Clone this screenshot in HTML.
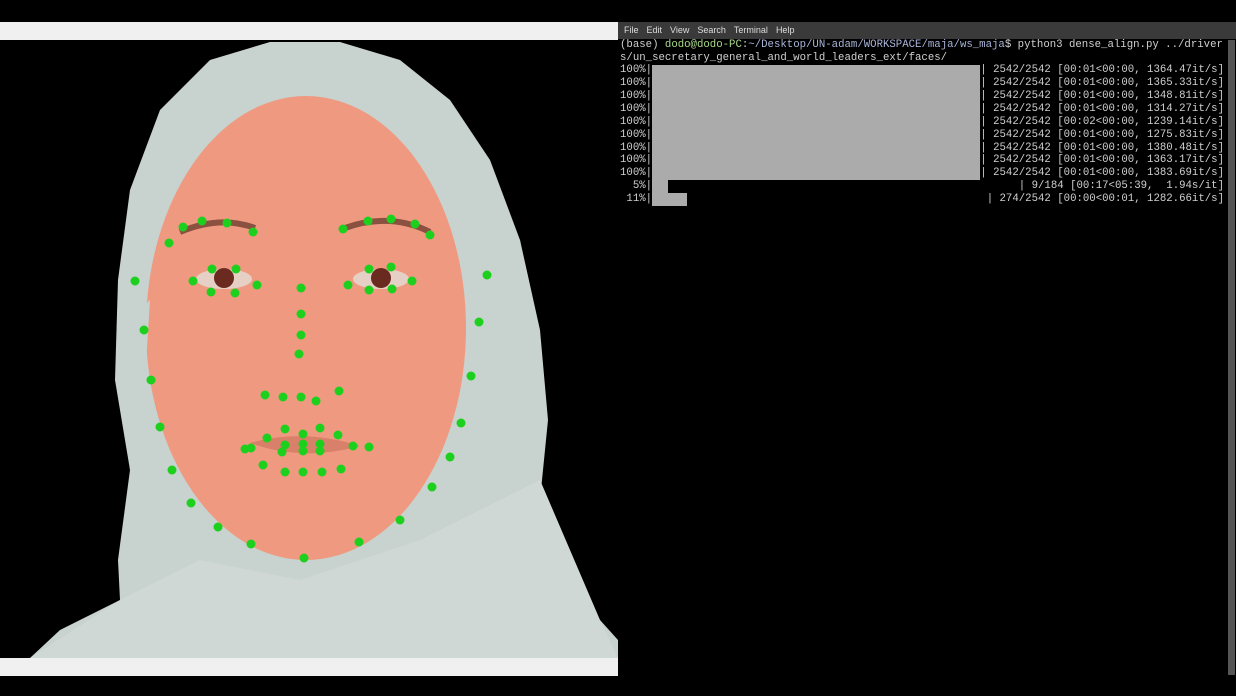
<!DOCTYPE html>
<html><head><meta charset="utf-8"><style>
html,body{margin:0;padding:0;background:#000;width:1236px;height:696px;overflow:hidden;position:relative;font-family:"Liberation Mono",monospace}
.bar{position:absolute;left:0;width:618px;height:18px;background:#f0f0f0}
#term{position:absolute;left:618px;top:22px;width:618px;height:653px;background:#000}
#menu{position:absolute;left:0;top:0;width:618px;height:17px;background:#3a3a3a;color:#ddd;font-family:"Liberation Sans",sans-serif;font-size:9px;line-height:17px}
#menu span{margin-left:6px;margin-right:2px}
.ln{position:absolute;left:2px;width:604px;height:13px;font-size:10.7px;line-height:13px;color:#d0d0d0;white-space:pre}
.r{position:absolute;right:0;top:0}
.g{position:absolute;background:#ababab}
#sb{position:absolute;left:1228px;top:40px;width:7px;height:635px;background:#555}
</style></head><body>
<div class="bar" style="top:22px"></div>
<div class="bar" style="top:658px"></div>
<svg style="position:absolute;left:0;top:40px" width="618" height="618" viewBox="0 40 618 618">
<path d="M30 658 L60 630 L120 600 L118 560 L130 470 L115 380 L118 280 L130 190 L160 110 L210 60 L270 42 L340 42 L400 60 L450 100 L490 160 L520 240 L540 330 L548 420 L540 500 L555 560 L600 620 L618 640 L618 658 Z" fill="#c8d2ce"/>
<path d="M120 600 L200 560 L300 580 L420 540 L540 480 L600 620 L618 658 L30 658 Z" fill="#cfd8d4"/>
<ellipse cx="306" cy="328" rx="160" ry="232" fill="#ef9a80"/>
<path d="M460 250 L480 320 L470 430 L440 500 L540 420 L520 240 Z" fill="#c8d2ce"/>
<path d="M150 300 L145 380 L160 470 L130 470 L118 330 Z" fill="#c8d2ce"/>
<path d="M180 232 Q220 215 255 228" stroke="#8a5040" stroke-width="6" fill="none"/>
<path d="M345 228 Q390 212 430 232" stroke="#8a5040" stroke-width="6" fill="none"/>
<ellipse cx="224" cy="279" rx="28" ry="10" fill="#e6cfc4"/><circle cx="224" cy="278" r="10" fill="#6a2a20"/>
<ellipse cx="381" cy="279" rx="28" ry="10" fill="#e6cfc4"/><circle cx="381" cy="278" r="10" fill="#6a2a20"/>
<path d="M250 443 Q303 428 360 446 Q303 462 250 443Z" fill="#d9806a"/>
<g fill="#1ed01e">
<circle cx="169" cy="243" r="4.5"/><circle cx="183" cy="227" r="4.5"/><circle cx="202" cy="221" r="4.5"/><circle cx="227" cy="223" r="4.5"/><circle cx="253" cy="232" r="4.5"/><circle cx="343" cy="229" r="4.5"/><circle cx="368" cy="221" r="4.5"/><circle cx="391" cy="219" r="4.5"/><circle cx="415" cy="224" r="4.5"/><circle cx="430" cy="235" r="4.5"/>
<circle cx="193" cy="281" r="4.5"/><circle cx="212" cy="269" r="4.5"/><circle cx="236" cy="269" r="4.5"/><circle cx="257" cy="285" r="4.5"/><circle cx="211" cy="292" r="4.5"/><circle cx="235" cy="293" r="4.5"/><circle cx="348" cy="285" r="4.5"/><circle cx="369" cy="269" r="4.5"/><circle cx="391" cy="267" r="4.5"/><circle cx="412" cy="281" r="4.5"/><circle cx="369" cy="290" r="4.5"/><circle cx="392" cy="289" r="4.5"/>
<circle cx="135" cy="281" r="4.5"/><circle cx="144" cy="330" r="4.5"/><circle cx="151" cy="380" r="4.5"/><circle cx="160" cy="427" r="4.5"/><circle cx="172" cy="470" r="4.5"/><circle cx="191" cy="503" r="4.5"/><circle cx="218" cy="527" r="4.5"/><circle cx="251" cy="544" r="4.5"/><circle cx="304" cy="558" r="4.5"/><circle cx="359" cy="542" r="4.5"/><circle cx="400" cy="520" r="4.5"/><circle cx="432" cy="487" r="4.5"/><circle cx="450" cy="457" r="4.5"/><circle cx="461" cy="423" r="4.5"/><circle cx="471" cy="376" r="4.5"/><circle cx="479" cy="322" r="4.5"/><circle cx="487" cy="275" r="4.5"/>
<circle cx="301" cy="288" r="4.5"/><circle cx="301" cy="314" r="4.5"/><circle cx="301" cy="335" r="4.5"/><circle cx="299" cy="354" r="4.5"/><circle cx="265" cy="395" r="4.5"/><circle cx="283" cy="397" r="4.5"/><circle cx="301" cy="397" r="4.5"/><circle cx="316" cy="401" r="4.5"/><circle cx="339" cy="391" r="4.5"/>
<circle cx="245" cy="449" r="4.5"/><circle cx="251" cy="448" r="4.5"/><circle cx="267" cy="438" r="4.5"/><circle cx="285" cy="429" r="4.5"/><circle cx="303" cy="434" r="4.5"/><circle cx="320" cy="428" r="4.5"/><circle cx="338" cy="435" r="4.5"/><circle cx="353" cy="446" r="4.5"/><circle cx="369" cy="447" r="4.5"/><circle cx="263" cy="465" r="4.5"/><circle cx="285" cy="472" r="4.5"/><circle cx="303" cy="472" r="4.5"/><circle cx="322" cy="472" r="4.5"/><circle cx="341" cy="469" r="4.5"/><circle cx="285" cy="445" r="4.5"/><circle cx="303" cy="444" r="4.5"/><circle cx="320" cy="444" r="4.5"/><circle cx="282" cy="452" r="4.5"/><circle cx="303" cy="451" r="4.5"/><circle cx="320" cy="451" r="4.5"/>
</g></svg>
<div id="term">
<div id="menu"><span>File</span><span>Edit</span><span>View</span><span>Search</span><span>Terminal</span><span>Help</span></div>
<div class="g" style="left:34px;top:43px;width:328px;height:115px"></div>
<div class="g" style="left:34px;top:158px;width:16px;height:13px"></div>
<div class="g" style="left:34px;top:171px;width:35px;height:13px"></div>
<div class="ln" style="top:17px">(base) <span style="color:#a8d88a">dodo@dodo-PC</span>:<span style="color:#a9b4d8">~/Desktop/UN-adam/WORKSPACE/maja/ws_maja</span>$ python3 dense_align.py ../driver</div>
<div class="ln" style="top:30px">s/un_secretary_general_and_world_leaders_ext/faces/</div>
<div class="ln" style="top:42px">100%|<span class="r">| 2542/2542 [00:01&lt;00:00, 1364.47it/s]</span></div>
<div class="ln" style="top:55px">100%|<span class="r">| 2542/2542 [00:01&lt;00:00, 1365.33it/s]</span></div>
<div class="ln" style="top:68px">100%|<span class="r">| 2542/2542 [00:01&lt;00:00, 1348.81it/s]</span></div>
<div class="ln" style="top:81px">100%|<span class="r">| 2542/2542 [00:01&lt;00:00, 1314.27it/s]</span></div>
<div class="ln" style="top:94px">100%|<span class="r">| 2542/2542 [00:02&lt;00:00, 1239.14it/s]</span></div>
<div class="ln" style="top:107px">100%|<span class="r">| 2542/2542 [00:01&lt;00:00, 1275.83it/s]</span></div>
<div class="ln" style="top:120px">100%|<span class="r">| 2542/2542 [00:01&lt;00:00, 1380.48it/s]</span></div>
<div class="ln" style="top:132px">100%|<span class="r">| 2542/2542 [00:01&lt;00:00, 1363.17it/s]</span></div>
<div class="ln" style="top:145px">100%|<span class="r">| 2542/2542 [00:01&lt;00:00, 1383.69it/s]</span></div>
<div class="ln" style="top:158px">  5%|<span class="r">| 9/184 [00:17&lt;05:39,  1.94s/it]</span></div>
<div class="ln" style="top:171px"> 11%|<span class="r">| 274/2542 [00:00&lt;00:01, 1282.66it/s]</span></div>
</div>
<div id="sb"></div>
</body></html>
